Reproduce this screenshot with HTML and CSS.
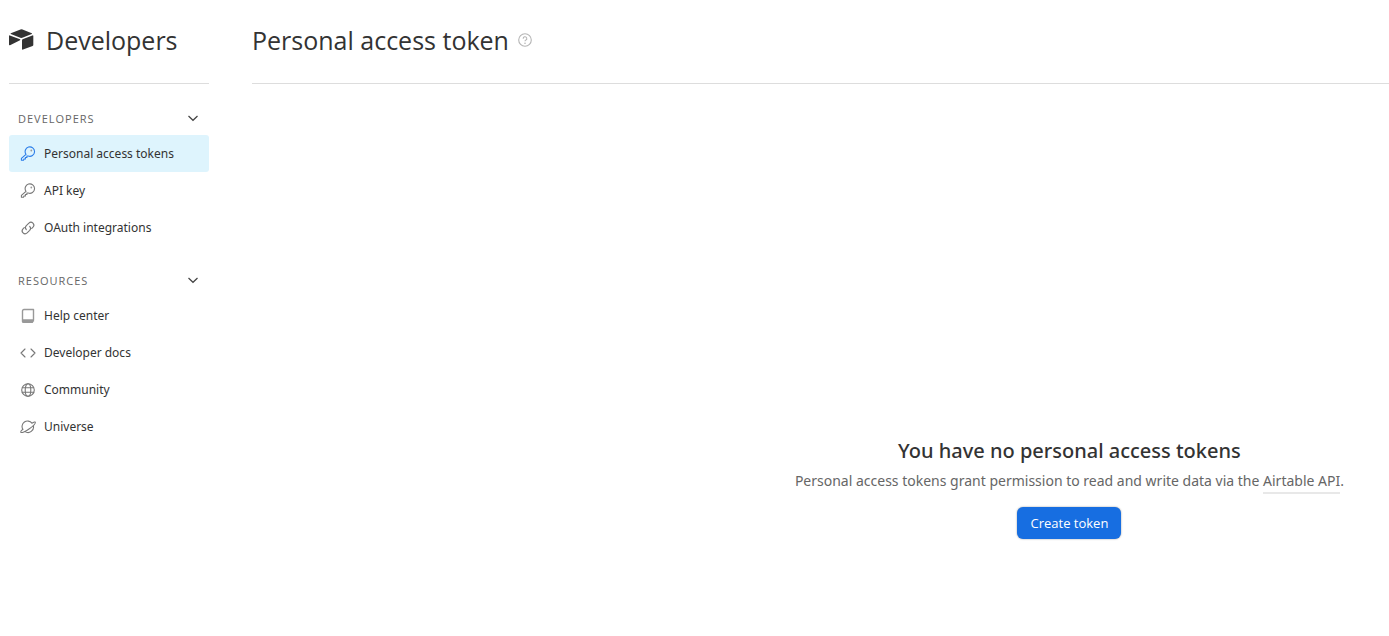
FILE: index.html
```html
<!DOCTYPE html>
<html lang="en">
<head>
<meta charset="utf-8">
<meta name="viewport" content="width=device-width, initial-scale=1">
<title>Personal access token</title>
<link rel="stylesheet" href="styles.css">
</head>
<body>
<div class="page">
  <aside class="sidebar">
    <div class="brand">
      <svg class="logo" viewBox="0 0 25 21" aria-hidden="true"><path d="M11.500 .5Q12.500 .1 13.500 .5L22.800 4.200Q23.300 4.600 22.800 5L13.300 8.800Q12.300 9.100 11.300 8.800L1.800 5Q1.300 4.600 1.800 4.200Z"/><path d="M0 7Q0 6.100 .8 6.400L11 10.300Q11.600 10.800 11 11.300L1 16.200Q0 16.600 0 15.600Z"/><path d="M13 11.200Q13 10.500 13.600 10.200L23.300 6.400Q24.300 6.100 24.300 7V15.900Q24.300 16.600 23.600 16.900L14 20.600Q13 20.900 13 20Z"/></svg>
      <span class="title">Developers</span>
    </div>
    <nav class="nav">
      <section class="group">
        <button class="group-head" type="button">DEVELOPERS
          <svg class="chevron" viewBox="0 0 12 8" aria-hidden="true"><path d="M1.500 2 6 6.300l4.500-4.300"/></svg>
        </button>
        <a class="item active" href="#tokens"><svg class="icon" viewBox="0 0 16 16" aria-hidden="true"><path d="M6 8.300A4.700 4.700 0 1 1 8.200 10L6.900 10V11.500H5.400V13H4L3.500 14.300H1.400V12.300Z"/><circle class="dot" cx="11.300" cy="4.500" r=".9"/></svg>Personal access tokens</a>
        <a class="item" href="#key"><svg class="icon" viewBox="0 0 16 16" aria-hidden="true"><path d="M6 8.300A4.700 4.700 0 1 1 8.200 10L6.900 10V11.500H5.400V13H4L3.500 14.300H1.400V12.300Z"/><circle class="dot" cx="11.300" cy="4.500" r=".9"/></svg>API key</a>
        <a class="item" href="#oauth"><svg class="icon" viewBox="0 0 16 16" aria-hidden="true"><path d="M6.300 9.700A2.900 2.900 0 0 1 6.300 5.700L8.900 3.100A2.900 2.900 0 0 1 13 7.200L11.800 8.400M9.700 6.300A2.900 2.900 0 0 1 9.700 10.300L7.100 12.900A2.900 2.900 0 0 1 3 8.800L4.200 7.600"/></svg>OAuth integrations</a>
      </section>
      <section class="group">
        <button class="group-head" type="button">RESOURCES
          <svg class="chevron" viewBox="0 0 12 8" aria-hidden="true"><path d="M1.500 2 6 6.300l4.500-4.300"/></svg>
        </button>
        <a class="item" href="#help"><svg class="icon" viewBox="0 0 16 16" aria-hidden="true"><path class="soft" d="M2.500 13.500V3Q2.500 1.500 4 1.500H13.500V12H3.500Q2.500 12 2.500 13.500Q2.500 14.300 3.500 14.300H12.500M3 13H13.500"/></svg>Help center</a>
        <a class="item" href="#docs"><svg class="icon" viewBox="0 0 16 16" aria-hidden="true"><path d="M5 4 1 8l4 4M11 4l4 4-4 4"/></svg>Developer docs</a>
        <a class="item" href="#community"><svg class="icon" viewBox="0 0 16 16" aria-hidden="true"><circle cx="8" cy="8" r="6.300"/><ellipse cx="8" cy="8" rx="2.800" ry="6.300"/><path d="M2.300 5.700H13.700M2.300 10.300H13.700"/></svg>Community</a>
        <a class="item" href="#universe"><svg class="icon" viewBox="0 0 16 16" aria-hidden="true"><path d="M2.900 10.500A5.500 5.500 0 0 1 11.900 4.200M13.300 6.500A5.500 5.500 0 0 1 5 12.600M11.900 4.200C14 3 15.300 2.700 15.300 3.300C15.600 4.500 12.700 7.500 9 10C5.500 12.600 1.400 14.300 .8 13.200C.4 12.600 1.300 11.500 2.900 10.200"/></svg>Universe</a>
      </section>
    </nav>
  </aside>
  <main class="main">
    <header class="header">
      <h1 class="title">Personal access token</h1>
      <button class="help" type="button" aria-label="Help">
        <svg class="help-icon" viewBox="0 0 14 14" aria-hidden="true"><circle cx="7" cy="7" r="6.300"/><path d="M5.200 5.700A1.800 1.800 0 1 1 7.900 7.100Q7 7.500 7 8.300"/><circle class="help-dot" cx="7" cy="10.300" r=".8"/></svg>
      </button>
    </header>
    <section class="empty">
      <h2 class="empty-title">You have no personal access tokens</h2>
      <p class="empty-text">Personal access tokens grant permission to read and write data via the <a class="link" href="#api">Airtable API</a>.</p>
      <button class="create" type="button">Create token</button>
    </section>
  </main>
</div>
</body>
</html>
```
FILE: styles.css
```css
* { box-sizing: border-box; }
body {
  margin: 0;
  background: #fff;
  color: #333;
  font-family: "Noto Sans", "Open Sans", sans-serif;
  font-size: 12px;
}
button { font: inherit; border: 0; background: none; padding: 0; cursor: pointer; }
.page { display: flex; gap: 43px; min-height: 100vh; padding-left: 9px; }
.sidebar { flex: 0 0 200px; }
.brand, .header {
  display: flex;
  align-items: center;
  height: 84px;
  padding-bottom: 3px;
  border-bottom: 1px solid #ddd;
}
.brand { gap: 12px; }
.logo { width: 25px; height: 21px; margin-bottom: 1px; fill: #333; }
.title { margin: 0; font-family: "Open Sans", "Noto Sans", sans-serif; font-size: 25px; line-height: 36px; font-weight: 500; }
.nav { display: flex; flex-direction: column; gap: 17px; padding-top: 17px; }
.group { display: flex; flex-direction: column; }
.group-head {
  display: flex;
  align-items: center;
  justify-content: space-between;
  height: 34px;
  padding: 0 9px;
  color: #666;
  font-family: "Open Sans", "Noto Sans", sans-serif;
  font-size: 11px;
  letter-spacing: 1px;
}
.chevron { width: 12px; height: 8px; margin-right: 1px; fill: none; stroke: #444; stroke-width: 1.200; }
.item {
  display: flex;
  align-items: center;
  gap: 8px;
  height: 37px;
  padding: 0 11px;
  border-radius: 3px;
  color: #333;
  text-decoration: none;
}
.active { background: #def4fd; }
.icon { width: 16px; height: 16px; fill: none; stroke: #777; stroke-width: 1.100; stroke-linejoin: round; stroke-linecap: round; }
.active .icon { stroke: #2b7de9; }
.icon .dot { fill: #999; stroke: none; }
.icon .soft { stroke: #999; stroke-width: 1.400; }
.main { flex: 1; min-width: 0; display: flex; flex-direction: column; }
.header { gap: 9px; }
.help { display: flex; }
.help-icon { width: 14px; height: 14px; fill: none; stroke: #b5b5b5; stroke-width: 1.100; }
.help-dot { fill: #b5b5b5; stroke: none; }
.empty {
  display: flex;
  flex-direction: column;
  align-items: center;
  align-self: flex-end;
  margin: 352px 45px 0 0;
}
.empty-title { margin: 0; font-size: 20px; line-height: 30px; font-weight: 500; }
.empty-text { margin: 4px 0 15px; font-size: 14px; line-height: 22px; color: #666; }
.link { color: inherit; text-decoration: none; padding-bottom: 2px; border-bottom: 2px solid #e8e8e8; }
.create {
  height: 32px;
  padding: 0 13px;
  border-radius: 6px;
  background: #176ee1;
  color: #fff;
  font-family: "Open Sans", "Noto Sans", sans-serif;
  font-size: 13px;
  box-shadow: 0 0 2px rgba(0, 0, 0, .4);
}
```
